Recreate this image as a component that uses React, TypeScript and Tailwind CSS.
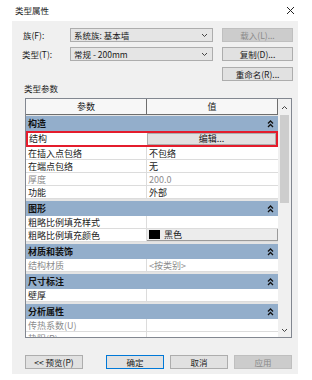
type Row =
  | { kind: "cat"; label: string }
  | { kind: "row"; label: string; value?: string; muted?: boolean; swatch?: boolean };

const rows: Row[] = [
  { kind: "row", label: "在插入点包络", value: "不包络" },
  { kind: "row", label: "在端点包络", value: "无" },
  { kind: "row", label: "厚度", value: "200.0", muted: true },
  { kind: "row", label: "功能", value: "外部" },
  { kind: "cat", label: "图形" },
  { kind: "row", label: "粗略比例填充样式" },
  { kind: "row", label: "粗略比例填充颜色", value: "黑色", swatch: true },
  { kind: "cat", label: "材质和装饰" },
  { kind: "row", label: "结构材质", value: "<按类别>", muted: true },
  { kind: "cat", label: "尺寸标注" },
  { kind: "row", label: "壁厚" },
  { kind: "cat", label: "分析属性" },
  { kind: "row", label: "传热系数(U)", muted: true },
  { kind: "row", label: "热阻(R)", muted: true },
];

const font = { fontFamily: '"Noto Sans CJK SC", "Noto Sans", sans-serif' };

function Collapse() {
  return (
    <svg width="7" height="8" viewBox="0 0 7 8" className="mr-[4px]">
      <path d="M1 3.5 L3.5 1 L6 3.5 M1 7 L3.5 4.5 L6 7" fill="none" stroke="#111" strokeWidth="1.3" />
    </svg>
  );
}

function Chevron({ up }: { up?: boolean }) {
  return (
    <svg width="7" height="5" viewBox="0 0 7 5">
      <path d={up ? "M1 4 L3.5 1.5 L6 4" : "M1 1 L3.5 3.5 L6 1"} fill="none" stroke="#444" strokeWidth="1" />
    </svg>
  );
}

function Combo({ text }: { text: string }) {
  return (
    <div className="flex h-[14px] w-[143px] items-center justify-between border border-[#adadad] bg-[#e5e5e5] pl-[3px] pr-[4px] text-[8.5px] text-[#1a1a1a]">
      <span>{text}</span>
      <Chevron />
    </div>
  );
}

function Btn({ text, disabled, focus }: { text: string; disabled?: boolean; focus?: boolean }) {
  const cls = disabled
    ? "border-[#bfbfbf] bg-[#cccccc] text-[#8a8a8a]"
    : focus
      ? "border-[#0078d7] bg-[#e1e1e1] text-[#1a1a1a]"
      : "border-[#adadad] bg-[#e1e1e1] text-[#1a1a1a]";
  return (
    <div className={`flex h-[14px] w-[58px] items-center justify-center border text-[8.5px] ${cls}`}>{text}</div>
  );
}

function TopBtn({ text, disabled }: { text: string; disabled?: boolean }) {
  return (
    <div
      className={`flex h-[14px] w-[71px] items-center justify-center border text-[8.5px] ${
        disabled ? "border-[#bfbfbf] bg-[#cccccc] text-[#8a8a8a]" : "border-[#adadad] bg-[#e1e1e1] text-[#1a1a1a]"
      }`}
    >
      {text}
    </div>
  );
}

function CatRow({ label }: { label: string }) {
  return (
    <div className="h-[17px] shrink-0 bg-[#e4e4e4] pt-[2px]">
      <div className="flex h-[15px] items-center justify-between bg-[#93aecb] pl-[2px] text-[9px] font-bold text-[#111]">
        <span>{label}</span>
        <Collapse />
      </div>
    </div>
  );
}

function DataRow({ row }: { row: Extract<Row, { kind: "row" }> }) {
  const tone = row.muted ? "text-[#8c8c8c]" : "text-[#1a1a1a]";
  return (
    <div className="flex h-[13px] shrink-0 border-b border-[#dcdcdc] bg-white text-[9px] leading-none">
      <div className={`flex w-[121px] items-center border-r border-[#dcdcdc] pl-[2px] ${tone}`}>{row.label}</div>
      {row.swatch ? (
        <div className="flex flex-1 items-center gap-[4px] border-r border-b border-[#9a9a9a] bg-[#ececec] pl-[2px]">
          <span className="h-[9px] w-[11px] bg-black" />
          <span className={tone}>{row.value}</span>
        </div>
      ) : (
        <div className={`flex flex-1 items-center pl-[2px] ${tone}`}>{row.value}</div>
      )}
    </div>
  );
}

export default function App() {
  return (
    <div className="relative h-[380px] w-[312px] overflow-hidden bg-white" style={font}>
      <div className="flex h-[21px] items-center justify-between pl-[15px] pr-[17px]">
        <span className="text-[8.5px] text-[#1a1a1a]">类型属性</span>
        <svg width="9" height="9" viewBox="0 0 9 9">
          <path d="M1 1 L8 8 M8 1 L1 8" stroke="#222" strokeWidth="1" />
        </svg>
      </div>

      <div className="ml-[12px] flex h-[353px] w-[286px] flex-col bg-[#f0f0f0] pt-[7px] text-[#1a1a1a]">
        <div className="flex items-center">
          <span className="w-[58px] pl-[11px] text-[8.5px]">族(F):</span>
          <Combo text="系统族: 基本墙" />
          <div className="ml-[9px]">
            <TopBtn text="载入(L)..." disabled />
          </div>
        </div>
        <div className="mt-[5px] flex items-center">
          <span className="w-[58px] pl-[10px] text-[8.5px]">类型(T):</span>
          <Combo text="常规 - 200mm" />
          <div className="ml-[9px]">
            <TopBtn text="复制(D)..." />
          </div>
        </div>
        <div className="mt-[6px] flex justify-end pr-[5px]">
          <TopBtn text="重命名(R)..." />
        </div>
        <div className="h-[14px] pl-[12px] text-[8.5px] leading-[14px]">类型参数</div>

        <div className="ml-[13px] mt-[3px] flex h-[240px] w-[267px] border border-[#828790] bg-white">
          <div className="flex w-[253px] flex-col overflow-hidden">
            <div className="flex h-[16px] shrink-0 text-[9px]">
              <div className="flex w-[121px] items-center justify-center border-r border-b border-[#6e6e6e] bg-[#f7f7f7]">参数</div>
              <div className="flex flex-1 items-center justify-center border-r border-b border-[#6e6e6e] bg-[#f7f7f7]">值</div>
            </div>
            <div className="h-[16px] shrink-0 bg-[#e4e4e4] pt-[1px]">
              <div className="flex h-[15px] items-center justify-between bg-[#93aecb] pl-[2px] text-[9px] font-bold text-[#111]">
                <span>构造</span>
                <Collapse />
              </div>
            </div>
            <div className="flex h-[16px] shrink-0 border-2 border-[#e41c2c] bg-white text-[9px]">
              <div className="flex w-[119px] items-center pl-[1px]">结构</div>
              <div className="flex flex-1 items-center justify-center border border-[#adadad] bg-[#e1e1e1]">编辑...</div>
            </div>
            {rows.map((r, i) =>
              r.kind === "cat" ? <CatRow key={i} label={r.label} /> : <DataRow key={i} row={r} />
            )}
          </div>
          <div className="flex w-[13px] flex-col items-center bg-[#f0f0f0]">
            <div className="flex h-[16px] items-center justify-center">
              <Chevron up />
            </div>
            <div className="h-[88px] w-[9px] bg-[#cdcdcd]" />
            <div className="flex-1" />
            <div className="flex h-[14px] items-center justify-center">
              <Chevron />
            </div>
          </div>
        </div>

        <div className="ml-[13px] mt-[17px] flex items-center">
          <Btn text="<< 预览(P)" />
          <div className="ml-[23px] flex gap-[6px]">
            <Btn text="确定" focus />
            <Btn text="取消" />
            <Btn text="应用" disabled />
          </div>
        </div>
      </div>
    </div>
  );
}
